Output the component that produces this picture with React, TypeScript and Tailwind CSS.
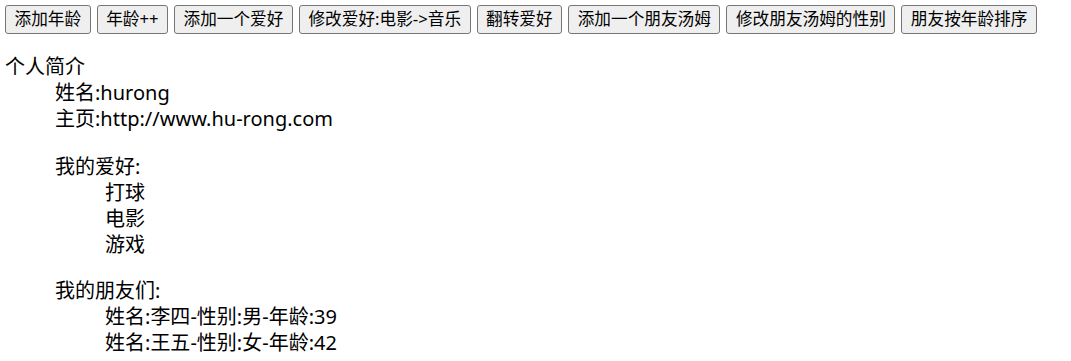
const buttons = [
  '添加年龄',
  '年龄++',
  '添加一个爱好',
  '修改爱好:电影->音乐',
  '翻转爱好',
  '添加一个朋友汤姆',
  '修改朋友汤姆的性别',
  '朋友按年龄排序',
]

const hobbies = ['打球', '电影', '游戏']

const friends = [
  { name: '李四', sex: '男', age: 39 },
  { name: '王五', sex: '女', age: 42 },
]

export default function App() {
  return (
    <div className="min-h-screen bg-white p-[5px] text-black font-['Noto_Sans','Noto_Sans_CJK_SC',sans-serif]">
      <div className="flex gap-[6px]">
        {buttons.map(label => (
          <button
            key={label}
            className="flex h-[29px] items-center whitespace-nowrap rounded-[3px] border border-[#767676] bg-[#efefef] px-[8.5px] text-[16.67px] leading-none text-black"
          >
            {label}
          </button>
        ))}
      </div>

      <dl className="mt-[20px] text-[20px] leading-[26px]">
        <dt>个人简介</dt>
        <dd className="ml-[50px]">
          <div>姓名:hurong</div>
          <div>主页:http://www.hu-rong.com</div>

          <div className="mt-[22px]">
            <div>我的爱好:</div>
            <div className="ml-[50px]">
              {hobbies.map(h => (
                <div key={h}>{h}</div>
              ))}
            </div>
          </div>

          <div className="mt-[20px]">
            <div>我的朋友们:</div>
            <div className="ml-[50px]">
              {friends.map(f => (
                <div key={f.name}>
                  姓名:{f.name}-性别:{f.sex}-年龄:{f.age}
                </div>
              ))}
            </div>
          </div>
        </dd>
      </dl>
    </div>
  )
}
